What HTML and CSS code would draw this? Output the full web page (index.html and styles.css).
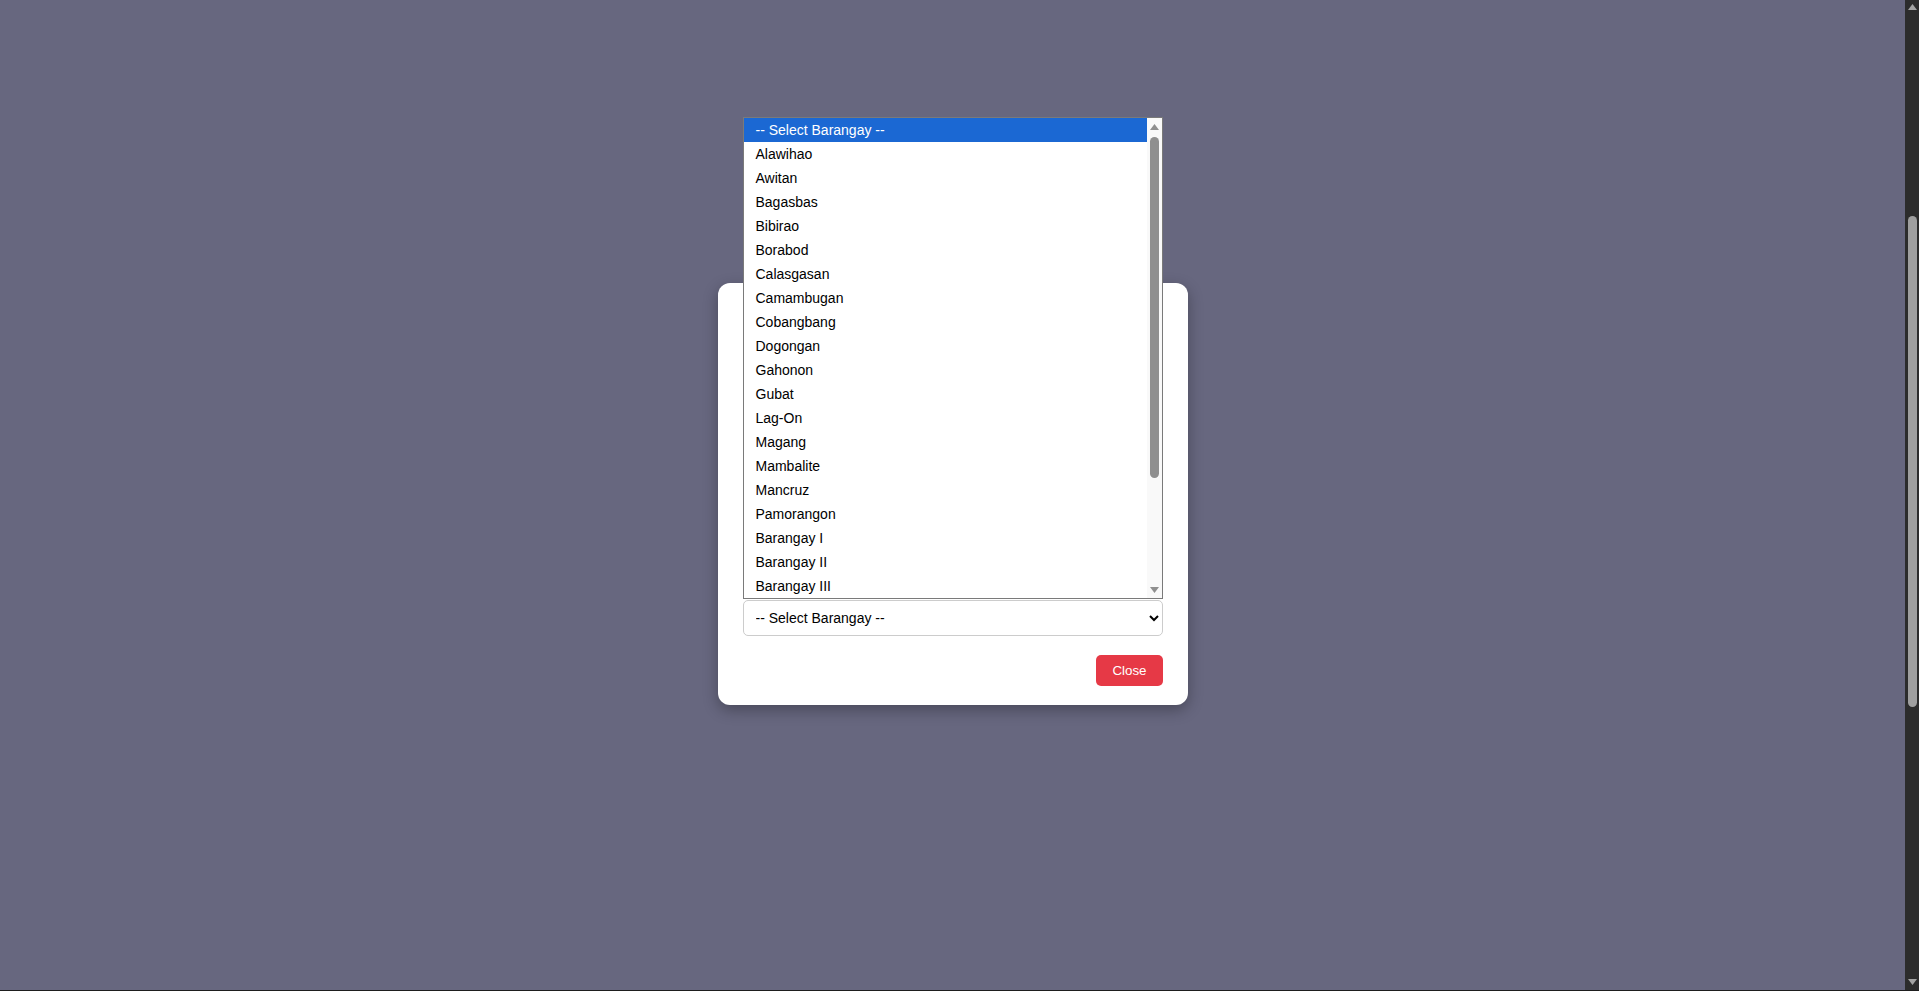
FILE: index.html
```html
<!DOCTYPE html>
<html lang="en">
<head>
<meta charset="utf-8">
<title>Select Barangay</title>
<link rel="stylesheet" href="styles.css">
</head>
<body>
<div class="app">
  <div class="main">
    <div class="stage">
      <div class="modal">
        <div class="modal-body"></div>
        <div class="select-wrap">
          <div class="listbox">
            <div class="options">
              <div class="option selected">-- Select Barangay --</div>
              <div class="option">Alawihao</div>
              <div class="option">Awitan</div>
              <div class="option">Bagasbas</div>
              <div class="option">Bibirao</div>
              <div class="option">Borabod</div>
              <div class="option">Calasgasan</div>
              <div class="option">Camambugan</div>
              <div class="option">Cobangbang</div>
              <div class="option">Dogongan</div>
              <div class="option">Gahonon</div>
              <div class="option">Gubat</div>
              <div class="option">Lag-On</div>
              <div class="option">Magang</div>
              <div class="option">Mambalite</div>
              <div class="option">Mancruz</div>
              <div class="option">Pamorangon</div>
              <div class="option">Barangay I</div>
              <div class="option">Barangay II</div>
              <div class="option">Barangay III</div>
            </div>
            <div class="list-scroll">
              <div class="ls-btn"><svg width="9" height="6" viewBox="0 0 9 6"><path d="M4.5 0 L9 6 L0 6 Z" fill="#8f8f8f"/></svg></div>
              <div class="ls-thumb"></div>
              <div class="ls-fill"></div>
              <div class="ls-btn"><svg width="9" height="6" viewBox="0 0 9 6"><path d="M0 0 L9 0 L4.5 6 Z" fill="#8f8f8f"/></svg></div>
            </div>
          </div>
          <select class="barangay-select">
            <option>-- Select Barangay --</option>
          </select>
        </div>
        <div class="modal-actions">
          <button class="btn-close" type="button">Close</button>
        </div>
      </div>
    </div>
    <div class="page-scroll">
      <div class="ps-btn ps-up"><svg width="9" height="6" viewBox="0 0 9 6"><path d="M4.5 0 L9 6 L0 6 Z" fill="#a3a3a3"/></svg></div>
      <div class="ps-thumb"></div>
      <div class="ps-fill"></div>
      <div class="ps-btn ps-down"><svg width="9" height="6" viewBox="0 0 9 6"><path d="M0 0 L9 0 L4.5 6 Z" fill="#a3a3a3"/></svg></div>
    </div>
  </div>
  <div class="bottom-line"></div>
</div>
</body>
</html>
```
FILE: styles.css
```css
* { box-sizing: border-box; }
html, body { margin: 0; padding: 0; }
body {
  font-family: "Liberation Sans", Arial, sans-serif;
  background: #67677f;
  overflow: hidden;
}
.app {
  width: 1919px;
  height: 991px;
  display: flex;
  flex-direction: column;
}
.main {
  flex: 1;
  display: flex;
  min-height: 0;
}
.stage {
  flex: 1;
  background: #67677f;
  display: flex;
  justify-content: center;
  align-items: flex-start;
  padding-top: 283px;
}
.modal {
  width: 470px;
  background: #ffffff;
  border-radius: 12px;
  padding: 25px 25px 19px;
  box-shadow: 0 5px 15px rgba(0, 0, 0, 0.3);
}
.modal-body {
  height: 292px;
}
.select-wrap {
  position: relative;
}
.listbox {
  position: absolute;
  left: 0;
  right: 0;
  bottom: calc(100% + 1px);
  height: 482px;
  border: 1px solid #7a7a7a;
  background: #ffffff;
  display: flex;
  z-index: 5;
}
.options {
  flex: 1;
  overflow: hidden;
}
.option {
  height: 24px;
  line-height: 24px;
  padding-left: 12px;
  font-size: 14px;
  color: #000000;
  white-space: nowrap;
}
.option.selected {
  background: #1b68d3;
  color: #ffffff;
}
.list-scroll {
  width: 15px;
  background: #f9f9f9;
  display: flex;
  flex-direction: column;
  align-items: center;
}
.ls-btn {
  height: 17px;
  display: flex;
  align-items: center;
  justify-content: center;
}
.ls-thumb {
  margin-top: 2px;
  width: 9px;
  height: 341px;
  border-radius: 5px;
  background: #8f8f8f;
}
.ls-fill { flex: 1; }
.barangay-select {
  display: block;
  width: 100%;
  height: 36px;
  border: 1px solid #cccccc;
  border-radius: 5px;
  background: #ffffff;
  color: #000000;
  font-family: "Liberation Sans", Arial, sans-serif;
  font-size: 14px;
  padding: 0 4px 0 8px;
}
.modal-actions {
  margin-top: 19px;
  display: flex;
  justify-content: flex-end;
}
.btn-close {
  height: 31px;
  padding: 0 16px;
  border: none;
  border-radius: 5px;
  background: #e63946;
  color: #ffffff;
  font-family: "Liberation Sans", Arial, sans-serif;
  font-size: 13.33px;
}
.page-scroll {
  width: 14px;
  background: #2c2c2c;
  display: flex;
  flex-direction: column;
  align-items: center;
}
.ps-btn {
  height: 15px;
  width: 100%;
  display: flex;
  justify-content: center;
}
.ps-up { align-items: flex-start; padding-top: 4px; }
.ps-down { align-items: flex-end; padding-bottom: 5px; }
.ps-thumb {
  margin-top: 201px;
  width: 9px;
  height: 491px;
  border-radius: 5px;
  background: #9f9f9f;
}
.ps-fill { flex: 1; }
.bottom-line {
  height: 1px;
  background: #1e1e1e;
}
```
